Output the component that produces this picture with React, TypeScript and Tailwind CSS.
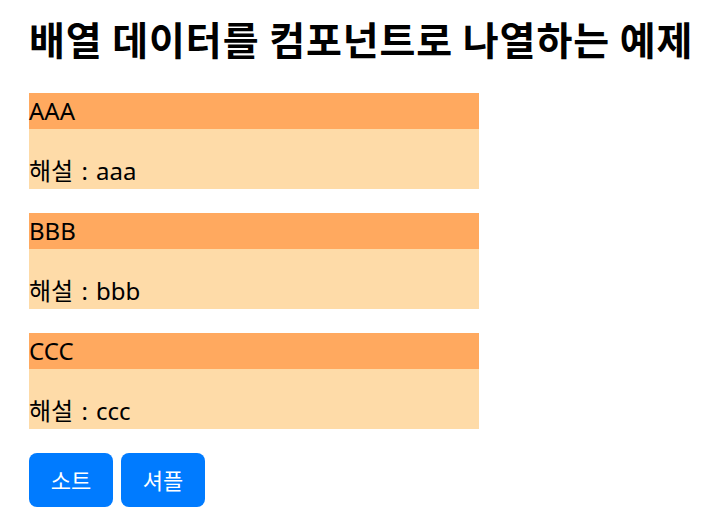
import { useState } from "react";

type Item = { id: number; title: string; desc: string };

const initial: Item[] = [
  { id: 1, title: "AAA", desc: "aaa" },
  { id: 2, title: "BBB", desc: "bbb" },
  { id: 3, title: "CCC", desc: "ccc" },
];

export default function App() {
  const [items, setItems] = useState<Item[]>(initial);

  const sortItems = () => setItems([...items].sort((a, b) => a.title.localeCompare(b.title)));
  const shuffleItems = () => setItems([...items].sort(() => Math.random() - 0.5));

  return (
    <div className="min-h-screen bg-white pl-[29px] pt-[14px] text-black [font-family:'Noto_Sans','Noto_Sans_CJK_KR',sans-serif]">
      <h1 className="text-[39px] font-bold leading-[48px] tracking-[0.9px] [font-family:'Noto_Sans_CJK_KR',sans-serif]">
        배열 데이터를 컴포넌트로 나열하는 예제
      </h1>
      <div className="mt-[31px] flex flex-col gap-6">
        {items.map((it) => (
          <div key={it.id} className="w-[450px]">
            <div className="bg-[#ffa95f] text-[24px] leading-[36px]">{it.title}</div>
            <div className="bg-[#fedba8] pt-6 text-[24px] leading-[36px] [word-spacing:2px]">해설 : {it.desc}</div>
          </div>
        ))}
      </div>
      <div className="mt-6 flex gap-2">
        <button onClick={sortItems} className="h-[54px] w-[84px] rounded-lg bg-[#007bff] text-[22px] text-white">
          소트
        </button>
        <button onClick={shuffleItems} className="h-[54px] w-[84px] rounded-lg bg-[#007bff] text-[22px] text-white">
          셔플
        </button>
      </div>
    </div>
  );
}
